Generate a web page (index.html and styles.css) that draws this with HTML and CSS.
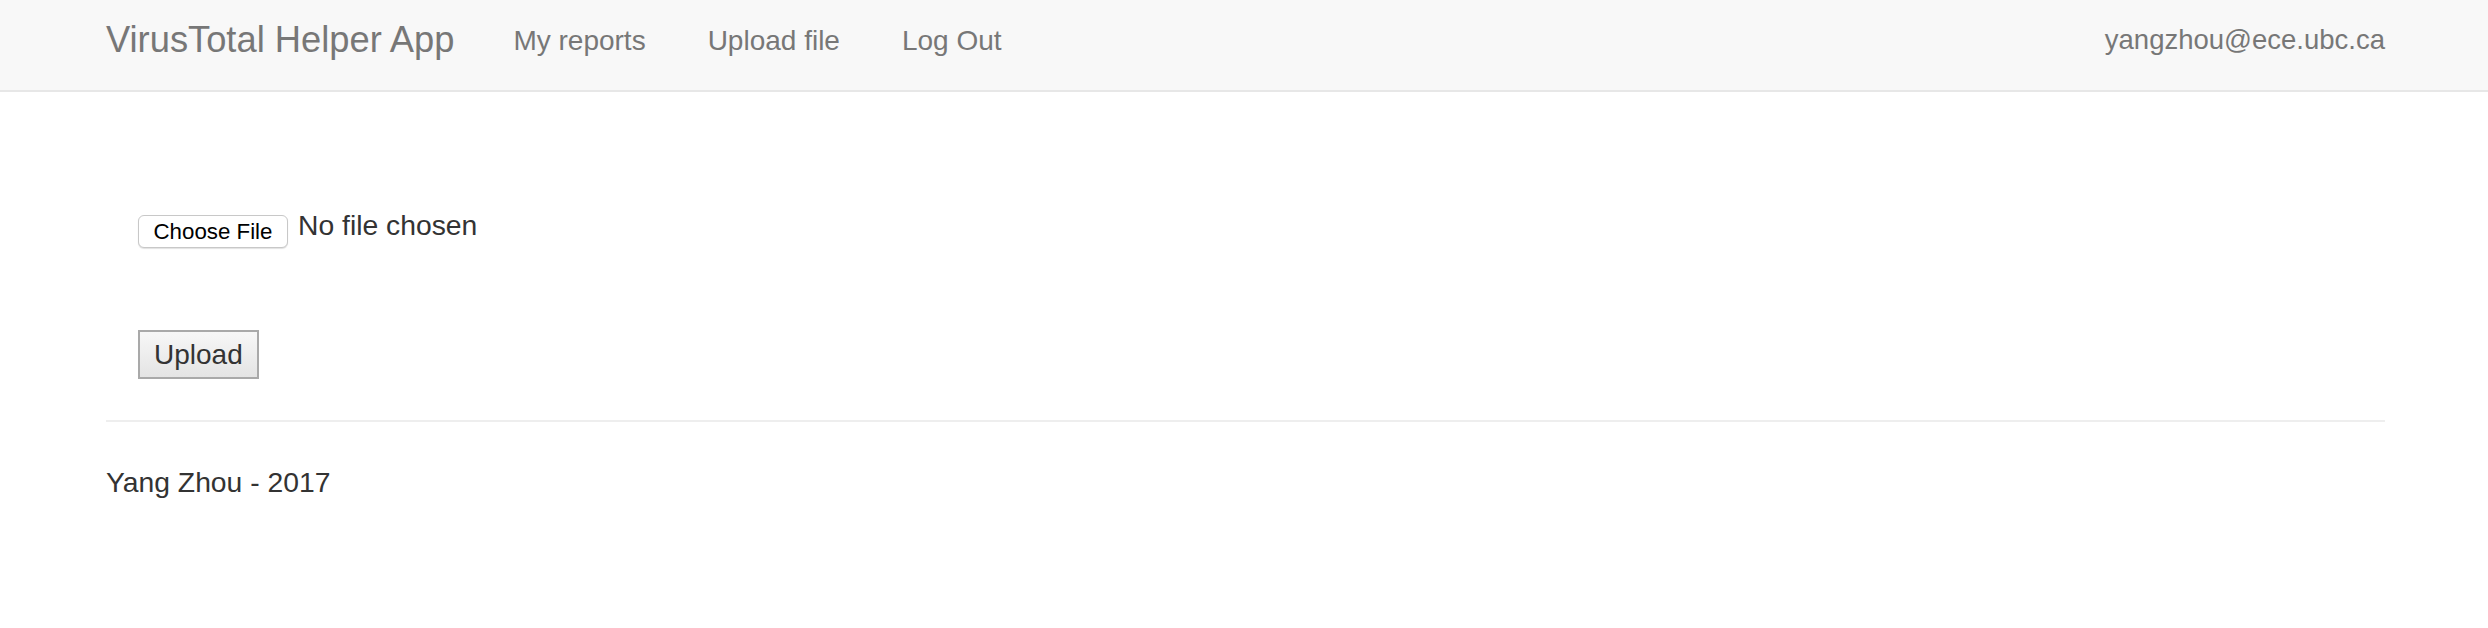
FILE: index.html
```html
<!DOCTYPE html>
<html lang="en">
<head>
<meta charset="utf-8">
<title>VirusTotal Helper App</title>
<link rel="stylesheet" href="styles.css">
</head>
<body>
<nav class="navbar">
  <div class="container nav-inner">
    <a class="brand" href="#">VirusTotal Helper App</a>
    <ul class="nav-links">
      <li><a href="#">My reports</a></li>
      <li><a href="#">Upload file</a></li>
      <li><a href="#">Log Out</a></li>
    </ul>
    <span class="user">yangzhou@ece.ubc.ca</span>
  </div>
</nav>
<main class="container">
  <form class="upload-form">
    <div class="file-row">
      <button type="button" class="file-btn">Choose File</button>
      <span class="file-status">No file chosen</span>
    </div>
    <button type="button" class="upload-btn">Upload</button>
  </form>
  <hr class="divider">
  <footer class="footer">Yang Zhou - 2017</footer>
</main>
</body>
</html>
```

FILE: styles.css
```css
* { box-sizing: border-box; }

body {
  margin: 0;
  font-family: "Liberation Sans", Arial, Helvetica, sans-serif;
  font-size: 28.3px;
  line-height: 39px;
  color: #333;
  background: #fff;
}

.container {
  width: 2279px;
  margin-left: 106px;
}

.navbar {
  height: 92px;
  background: #f8f8f8;
  border-bottom: 2px solid #e7e7e7;
}

.nav-inner {
  display: flex;
  align-items: flex-start;
}

.brand {
  font-size: 36.3px;
  line-height: 39px;
  padding-top: 20px;
  padding-right: 28px;
  color: #777;
  text-decoration: none;
}

.nav-links {
  display: flex;
  list-style: none;
  margin: 0;
  padding: 0;
}

.nav-links a {
  display: block;
  font-size: 28px;
  line-height: 39px;
  padding: 21px 31px 0;
  color: #777;
  text-decoration: none;
}

.user {
  margin-left: auto;
  font-size: 27.5px;
  line-height: 39px;
  padding-top: 20px;
  color: #777;
}

.upload-form {
  margin-left: 32px;
  padding-top: 114px;
}

.file-row {
  display: flex;
  align-items: flex-start;
}

.file-btn {
  margin-top: 9px;
  height: 33px;
  padding: 0 14.5px;
  font-family: "Liberation Sans", Arial, sans-serif;
  font-size: 22.3px;
  line-height: 31px;
  color: #000;
  background: #fff;
  border: 1px solid #c8c8c8;
  border-radius: 6px;
  box-shadow: 0 1px 1px rgba(0, 0, 0, 0.12);
}

.file-status {
  margin-left: 10px;
  font-size: 28.3px;
  line-height: 39px;
}

.upload-btn {
  display: block;
  margin-top: 82px;
  height: 49px;
  padding: 0 14px;
  font-family: "Liberation Sans", Arial, sans-serif;
  font-size: 28px;
  line-height: 45px;
  color: #333;
  background: linear-gradient(#f7f7f7, #e4e4e4);
  border: 2px solid #a9a9a9;
  border-radius: 0;
}

.divider {
  margin: 41px 0 0;
  border: 0;
  border-top: 2px solid #eee;
  height: 0;
}

.footer {
  padding-top: 40.6px;
  font-size: 28.3px;
  line-height: 39px;
}
```
